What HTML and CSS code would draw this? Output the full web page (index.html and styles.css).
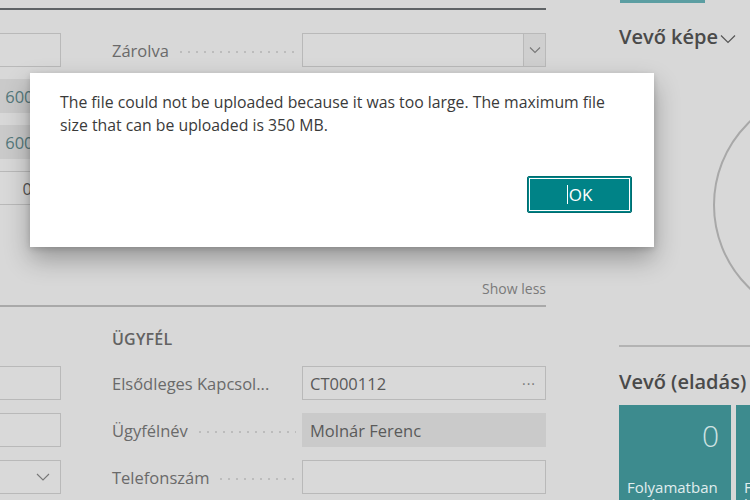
FILE: index.html
```html
<!DOCTYPE html>
<html>
<head>
<meta charset="utf-8">
<link rel="stylesheet" href="styles.css">
</head>
<body>
<div class="page">
  <div class="main">
    <div class="topline"></div>
    <div class="fields">
      <div class="col-left">
        <div class="box"></div>
        <div class="box filled teal-text">6000</div>
        <div class="box filled teal-text">6000</div>
        <div class="box right-num">0</div>
      </div>
      <div class="col-right">
        <div class="row">
          <div class="label">Zárolva<span class="dots"></span></div>
          <div class="box select"><span class="drop"><svg width="12" height="8" viewBox="0 0 12 8"><path d="M1 1.5 6 6.5 11 1.5" fill="none" stroke="#777" stroke-width="1.1"/></svg></span></div>
        </div>
        <div class="row"><div class="label">Egyenleg<span class="dots"></span></div><div class="box filled teal-text">6000</div></div>
        <div class="row"><div class="label">Hitelkeret<span class="dots"></span></div><div class="box filled teal-text">6000</div></div>
        <div class="row"><div class="label">Összeg<span class="dots"></span></div><div class="box right-num">0</div></div>
      </div>
    </div>
    <div class="showless">Show less</div>
    <div class="sep"></div>
    <div class="fields sec2">
      <div class="col-left">
        <div class="group-title spacer"></div>
        <div class="box"></div>
        <div class="box"></div>
        <div class="box chev"><svg width="14" height="8" viewBox="0 0 14 8"><path d="M1 1 7 7 13 1" fill="none" stroke="#777" stroke-width="1.1"/></svg></div>
      </div>
      <div class="col-right">
        <div class="group-title">ÜGYFÉL</div>
        <div class="row"><div class="label">Elsődleges Kapcsol...</div><div class="box val">CT000112<span class="more">···</span></div></div>
        <div class="row"><div class="label">Ügyfélnév<span class="dots"></span></div><div class="box filled val">Molnár Ferenc</div></div>
        <div class="row"><div class="label">Telefonszám<span class="dots"></span></div><div class="box"></div></div>
      </div>
    </div>
  </div>
  <div class="side">
    <div class="tabbar"></div>
    <div class="side-title">Vevő képe<svg class="hchev" width="16" height="10" viewBox="0 0 16 10"><path d="M1 1.5 8 8.5 15 1.5" fill="none" stroke="#555" stroke-width="1.2"/></svg></div>
    <div class="picture"><div class="circle"></div></div>
    <div class="side-sep"></div>
    <div class="side-title t2">Vevő (eladás)</div>
    <div class="tiles">
      <div class="tile"><div class="num">0</div><div class="tcap">Folyamatban Kaján ajánlatok</div></div>
      <div class="tile"><div class="num">0</div><div class="tcap">Folyamatban levő rendelések</div></div>
    </div>
  </div>
</div>
<div class="dialog">
  <p class="msg">The file could not be uploaded because it was too large. The maximum file size that can be uploaded is 350 MB.</p>
  <div class="actions"><button class="ok"><span class="caret"></span>OK</button></div>
</div>
</body>
</html>
```
FILE: styles.css
```css
html, body {
  margin: 0;
  padding: 0;
  width: 750px;
  height: 500px;
  overflow: hidden;
  background: #d8d8d8;
  font-family: "Open Sans", "Noto Sans", sans-serif;
  color: #5e5e5e;
}
.page {
  display: flex;
  gap: 73px;
  margin-left: -200px;
  height: 500px;
  overflow: hidden;
}
.main {
  width: 746px;
  flex: none;
}
.topline {
  height: 2px;
  background: #5f6366;
  margin-top: 8px;
}
.fields {
  display: flex;
  gap: 51px;
  margin-top: 23px;
}
.col-left {
  width: 261px;
  display: flex;
  flex-direction: column;
  gap: 12px;
}
.col-right {
  width: 434px;
  display: flex;
  flex-direction: column;
  gap: 12px;
}
.row {
  display: flex;
  align-items: center;
  height: 34px;
}
.label {
  width: 190px;
  flex: none;
  display: flex;
  align-items: center;
  font-size: 16.5px;
  color: #6a6a6a;
  white-space: nowrap;
}
.dots {
  flex: 1;
  margin-left: 8px;
  margin-right: 6px;
  height: 2px;
  background-image: radial-gradient(circle, #bcbcbc 0.8px, transparent 1px);
  background-size: 8px 2px;
  margin-top: 4px;
}
.box {
  height: 32px;
  border: 1px solid #b9b9b9;
  background: #d9d9d9;
  display: flex;
  align-items: center;
  font-size: 16px;
  padding: 0 7px;
  position: relative;
}
.row .box { width: 244px; box-sizing: border-box; height: 34px; flex: none; }
.box.filled {
  background: #cacaca;
  border-color: #cacaca;
}
.teal-text { color: #55797c; justify-content: flex-end; }
.col-left .teal-text { justify-content: flex-end; padding-right: 17px; font-size: 16.5px; }
.right-num { justify-content: flex-end; color: #555; }
.col-left .right-num { padding-right: 28px; font-size: 16.5px; }
.select { padding: 0; }
.drop {
  position: absolute;
  right: 0;
  top: 0;
  width: 21px;
  height: 32px;
  border-left: 1px solid #b9b9b9;
  background: #cfcfcf;
  display: flex;
  align-items: center;
  justify-content: center;
}
.chev { justify-content: flex-end; padding-right: 10px; }
.val { color: #5a5a5a; font-size: 16.5px; }
.more { margin-left: auto; color: #777; font-size: 14px; letter-spacing: 1px; padding-right: 2px; }
.showless {
  text-align: right;
  font-size: 14px;
  color: #7a7a7a;
  margin-top: 74px;
  line-height: 20px;
}
.sep {
  height: 2px;
  background: #a9a9a9;
  margin-top: 6px;
}
.sec2 { margin-top: 24px; }
.sec2 .col-left { gap: 13px; }
.sec2 .col-right { gap: 13px; }
.group-title {
  font-size: 16px;
  font-weight: 600;
  color: #626262;
  letter-spacing: 0.2px;
  height: 16px;
  line-height: 16px;
  margin-bottom: 6px;
}
.side {
  width: 160px;
  flex: none;
}
.tabbar {
  width: 85px;
  height: 3px;
  background: #5c9ea2;
  margin-left: 1px;
}
.side-title {
  font-size: 20px;
  font-weight: 600;
  color: #4a4a4a;
  margin-top: 20px;
  line-height: 28px;
  display: flex;
  align-items: center;
  gap: 2px;
  white-space: nowrap;
}
.hchev { margin-top: 3px; }
.picture {
  height: 294px;
  position: relative;
  overflow: hidden;
}
.circle {
  position: absolute;
  left: 94px;
  top: 38px;
  width: 232px;
  height: 232px;
  border-radius: 50%;
  border: 2px solid #a8a8a8;
  box-sizing: border-box;
}
.side-sep {
  height: 2px;
  background: #b3b3b3;
}
.t2 { margin-top: 21px; }
.tiles {
  display: flex;
  gap: 5px;
  margin-top: 9px;
}
.tile {
  width: 112px;
  height: 100px;
  flex: none;
  background: #3d8b8e;
  color: #d9eaea;
  box-sizing: border-box;
  padding: 14px 12px 0 8px;
  overflow: hidden;
}
.num {
  text-align: right;
  font-size: 30px;
  font-weight: 300;
  line-height: 34px;
  color: #cfe3e3;
}
.tcap {
  margin-top: 26px;
  font-size: 15px;
  line-height: 17px;
  color: #e0eeee;
}
.dialog {
  position: absolute;
  left: 30px;
  top: 73px;
  width: 624px;
  height: 174px;
  background: #ffffff;
  box-shadow: 0 12px 24px rgba(0,0,0,0.3), 0 2px 6px rgba(0,0,0,0.15);
  box-sizing: border-box;
  padding: 18px 30px 0 30px;
}
.msg {
  margin: 0;
  font-size: 15.8px;
  line-height: 23px;
  color: #3a3a3a;
  width: 562px;
}
.actions {
  display: flex;
  justify-content: flex-end;
  margin-top: 39px;
  margin-right: -8px;
}
.ok {
  width: 105px;
  height: 37px;
  background: #008387;
  border: 1px solid #006d70;
  border-radius: 2px;
  box-shadow: inset 0 0 0 1px #008387, inset 0 0 0 2px #ffffff;
  color: #ffffff;
  font-family: "Open Sans", sans-serif;
  font-size: 17px;
  font-weight: 500;
  display: flex;
  align-items: center;
  justify-content: center;
  position: relative;
  padding: 0;
}
.caret {
  width: 1px;
  height: 19px;
  background: #ffffff;
  margin-right: 1px;
}
```
